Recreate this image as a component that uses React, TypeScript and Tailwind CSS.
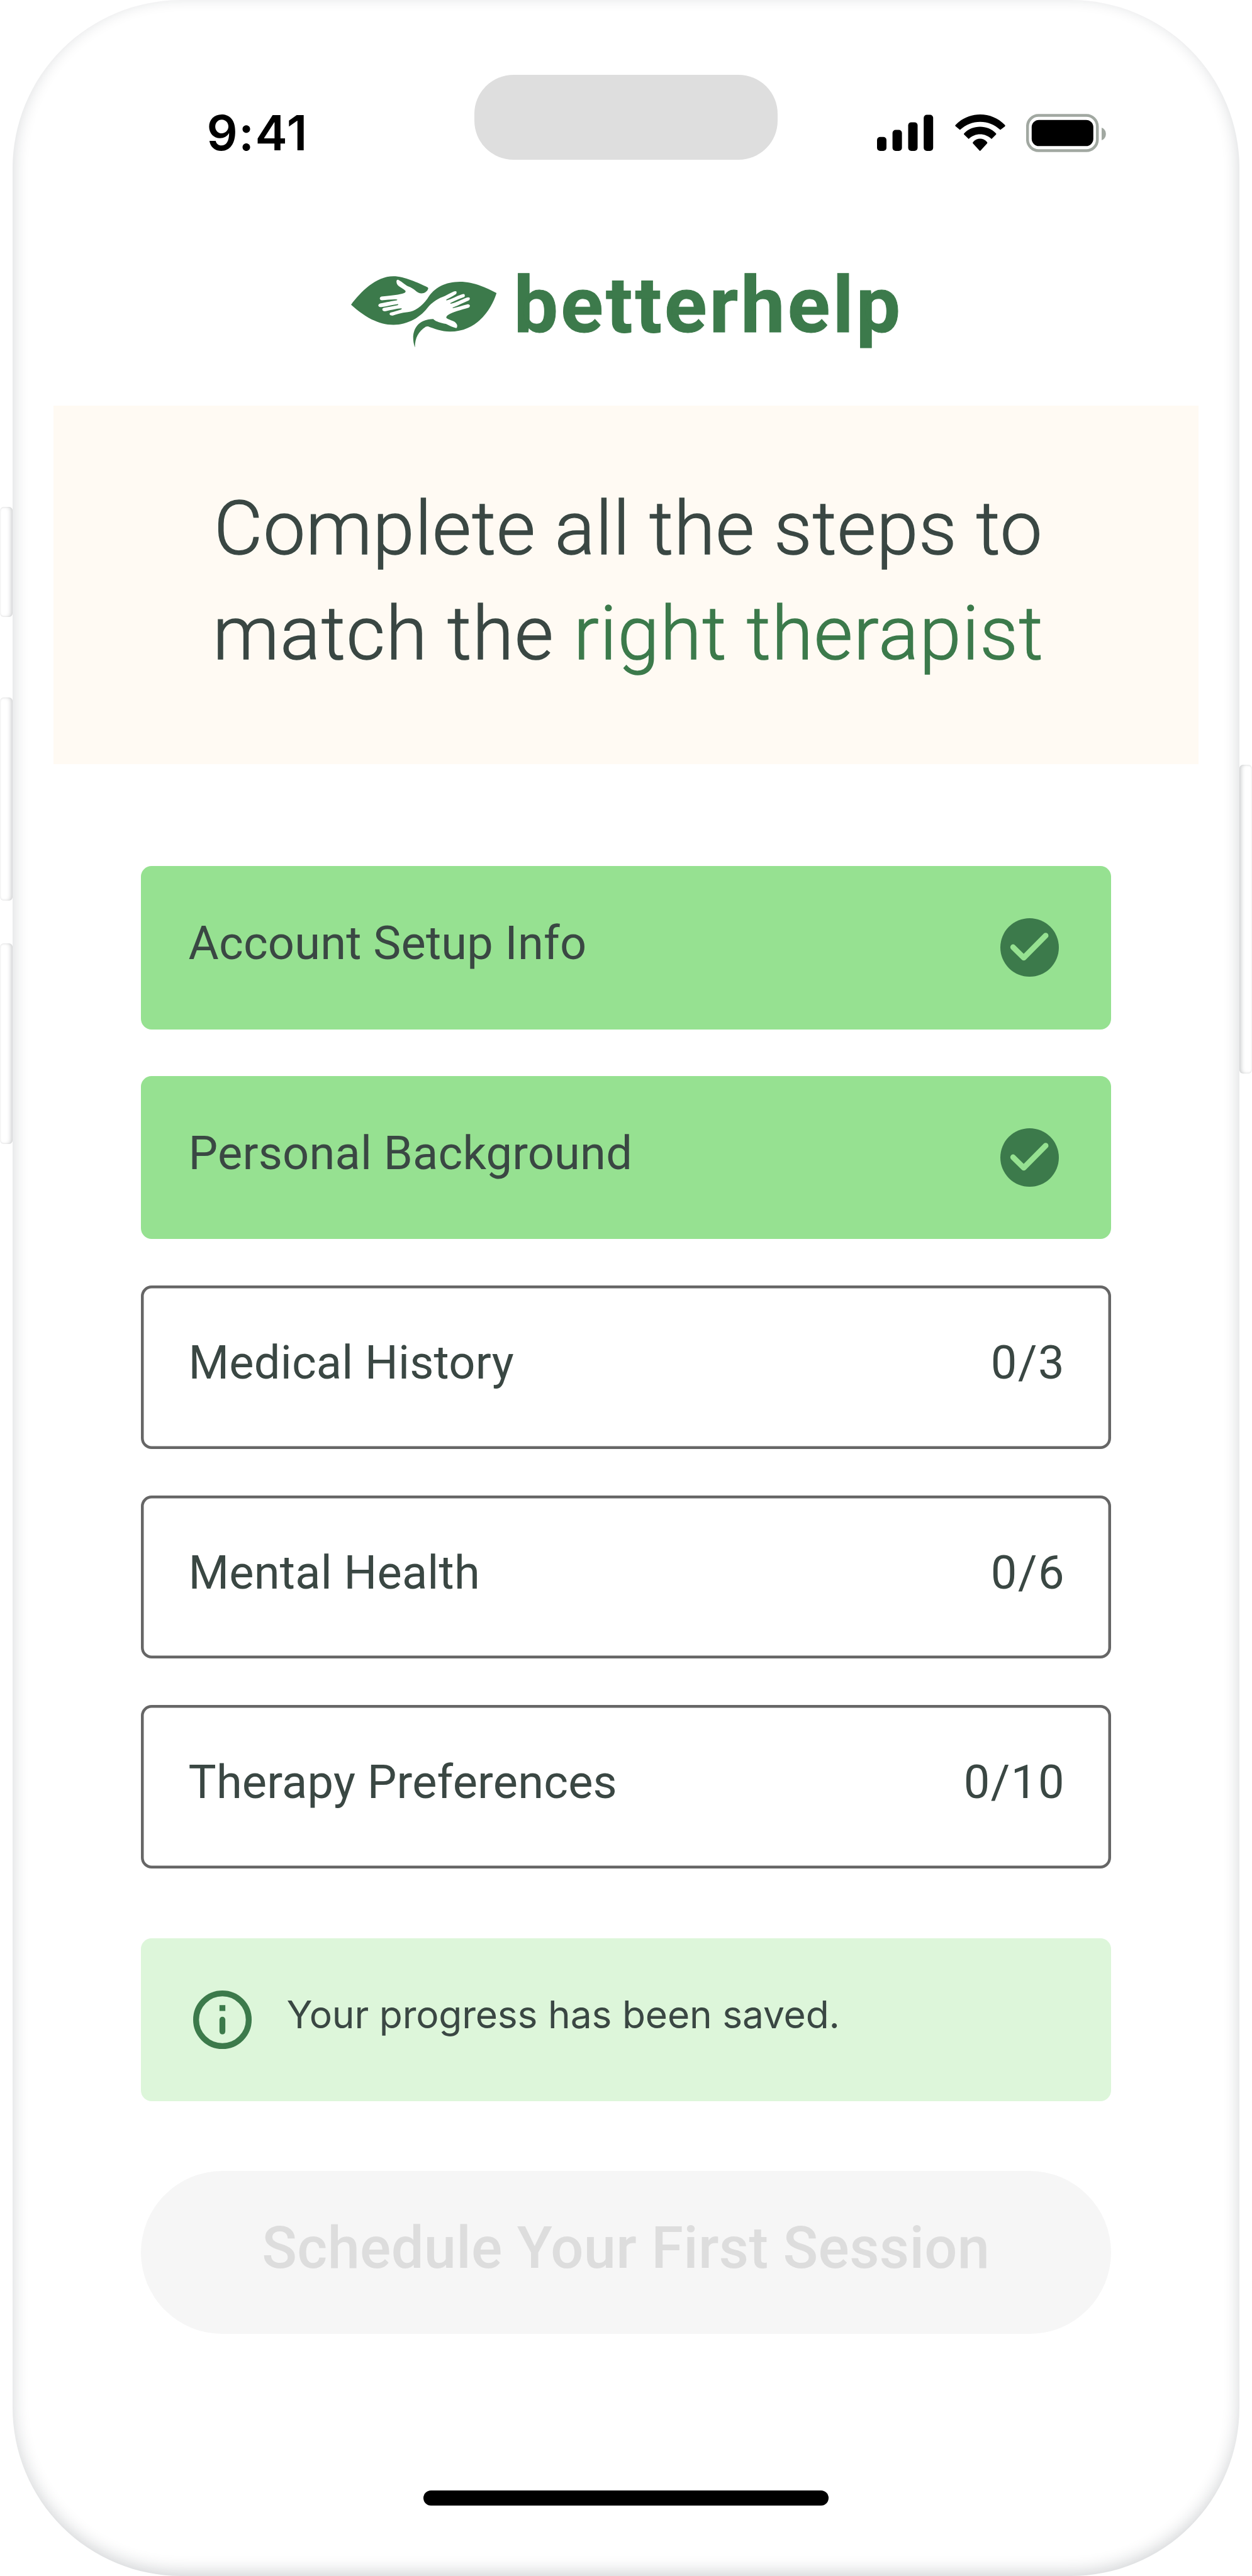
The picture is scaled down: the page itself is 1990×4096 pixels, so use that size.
const steps = [
    { label: 'Account Setup Info', done: true },
    { label: 'Personal Background', done: true },
    { label: 'Medical History', count: '0/3' },
    { label: 'Mental Health', count: '0/6' },
    { label: 'Therapy Preferences', count: '0/10' },
]

function StatusIcons() {
    return (
        <div className="flex items-center">
            <svg className="w-[90px] h-[58px]" viewBox="0 0 90 58">
                <rect x="0" y="35.8" width="15" height="22.2" rx="5" />
                <rect x="24.6" y="24.5" width="15" height="33.5" rx="5" />
                <rect x="49.5" y="12.4" width="15" height="45.6" rx="5" />
                <rect x="74.2" y="0.6" width="15" height="57.4" rx="5" />
            </svg>
            <svg className="w-[80px] h-[59px] ml-[34px]" viewBox="0 0 80 59">
                <path d="M1 16.5C22-5.5 58-5.5 79 16.5Q80.5 17.8 79 19.3L72 24.6C54 7.4 26 7.4 7.8 24.6L.8 18.8Q-.4 17.5 1 16.5Z" />
                <path d="M14.5 30C28 16.1 51.5 16.1 65 30Q66.2 31 65 32L58 39C48 29 31.5 29 21.7 39L14.4 32Q13.5 31 14.5 30Z" />
                <path d="M28.5 44C35 36.7 44.5 36.7 51 44Q51.6 45 51 46L40.5 57.5Q39.7 58.3 38.9 57.5L28.4 46Q27.8 45 28.5 44Z" />
            </svg>
            <svg className="w-[127px] h-[61px] ml-[33px]" viewBox="0 0 127 61">
                <rect
                    x="2.2"
                    y="2.5"
                    width="111"
                    height="56"
                    rx="17.5"
                    fill="none"
                    stroke="#a1a8a1"
                    strokeWidth="4.5"
                />
                <rect x="8.8" y="9.7" width="98" height="41.6" rx="11.5" />
                <path d="M120 22C129 25 129 39 120 42Z" fill="#a1a8a1" />
            </svg>
        </div>
    )
}

function Leaf() {
    return (
        <svg
            className="w-[231.4px] h-[113.6px]"
            viewBox="107 115 1263 620"
            fill="#3c7a4b"
        >
            <path
                d="M107 363C190 255 320 117 475 117C570 117 690 175 770 212Q777 216 776 225Q773 238 755 253C735 268 710 268 690 258
                C665 245 655 225 605 205C580 196 560 170 515 146Q500 145 501 165C503 210 560 215 580 245Q583 262 550 268
                C500 280 450 285 370 292Q355 297 356 310Q360 325 375 325C420 322 470 315 505 318Q512 321 505 325
                C460 330 420 342 360 352Q343 358 343 370Q348 385 370 384C420 378 470 362 515 358Q520 362 512 367
                C470 375 430 383 390 390Q377 395 378 405Q382 420 400 420C440 415 490 398 545 395Q550 400 540 405
                C510 413 480 425 450 432Q440 438 441 447Q447 460 470 457C500 450 540 433 600 428
                C660 420 720 380 770 310C830 210 930 165 1050 164C1170 164 1280 215 1369 263
                C1330 390 1210 597 965 597C890 597 830 572 775 552Q765 550 755 555C690 600 662 650 661 735
                C620 620 660 490 820 487C840 510 880 520 930 530C960 545 990 560 1020 566Q1030 560 1027 540
                C1015 500 960 500 935 480Q928 470 945 455C990 425 1060 410 1130 388Q1140 380 1137 368Q1130 357 1115 360
                C1070 370 1030 385 990 394Q985 390 992 386C1040 370 1080 345 1130 325Q1140 315 1136 303Q1125 295 1110 302
                C1060 320 1020 345 970 355Q965 352 972 347C1010 330 1050 310 1090 297Q1098 285 1090 272Q1080 268 1065 275
                C1020 290 980 315 935 326Q930 322 936 317C960 305 990 290 1018 270Q1026 258 1020 248Q1010 243 995 250
                C960 265 930 285 900 297C850 315 810 345 770 390C700 480 590 538 475 538C330 538 210 455 107 363Z"
            />
        </svg>
    )
}

function CheckIcon() {
    return (
        <svg className="size-[93px]" viewBox="0 0 20 20">
            <circle cx="10" cy="10" r="10" fill="#3c7a4b" />
            <path
                d="M4.35 9.9L8 13.5L15.5 5.95"
                fill="none"
                stroke="#96e191"
                strokeWidth="1.9"
                strokeLinecap="round"
                strokeLinejoin="round"
            />
        </svg>
    )
}

function InfoIcon() {
    return (
        <svg className="size-[93px]" viewBox="0 0 20 20" fill="#3c7a4b">
            <circle
                cx="10"
                cy="10"
                r="9"
                fill="none"
                stroke="#3c7a4b"
                strokeWidth="2"
            />
            <rect x="9" y="5" width="2" height="2" />
            <rect x="9" y="9" width="2" height="6" rx="1" />
        </svg>
    )
}

export default function App() {
    return (
        <div className="flex w-[1990px] h-[4096px] overflow-hidden bg-white font-['Roboto',sans-serif] text-[#3a4743]">
            {/* volume buttons */}
            <div className="flex flex-col w-[19.6px] pt-[806px]">
                <div className="h-[175px] rounded-[6px] shadow-[inset_-5px_0_6px_-2px_#d4d5d6,inset_0_0_3px_#dddddd]"></div>
                <div className="h-[323px] mt-[128px] rounded-[6px] shadow-[inset_-5px_0_6px_-2px_#d4d5d6,inset_0_0_3px_#dddddd]"></div>
                <div className="h-[319px] mt-[68px] rounded-[6px] shadow-[inset_-5px_0_6px_-2px_#d4d5d6,inset_0_0_3px_#dddddd]"></div>
            </div>

            <div className="flex flex-col items-center w-[1950.4px] h-full rounded-[268px] shadow-[inset_0_-7px_26px_rgba(20,30,40,0.19)]">
                <div className="flex w-full h-[134.4px] mt-[119.3px]">
                    <div className="flex items-center w-[734px] pl-[309px] pt-[50px]">
                        <p className="font-['Inter',sans-serif] font-semibold text-[77px] leading-none tracking-[1.5px] text-black whitespace-nowrap">
                            9:41
                        </p>
                    </div>
                    <div className="w-[482.5px] rounded-[62px] bg-[#dedede]"></div>
                    <div className="flex items-center pl-[158px] pt-[50px]">
                        <StatusIcons />
                    </div>
                </div>

                <div className="flex w-full pl-[538.7px] mt-[185px] h-[113.6px]">
                    <Leaf />
                    <p className="ml-[27px] -mt-[16px] text-[125px] leading-[125px] font-bold tracking-[4.2px] text-[#3c7a4b] [-webkit-text-stroke:1px_#3c7a4b]">
                        betterhelp
                    </p>
                </div>

                <div className="w-[1820px] h-[570px] mt-[92.6px] pt-[112px] pl-[8px] bg-[#fffaf3]">
                    <h1 className="flex flex-col items-center text-[119px] leading-[167px] font-light whitespace-nowrap [-webkit-text-stroke:1.4px_currentColor]">
                        <span className="tracking-[1px]">
                            Complete all the steps to
                        </span>
                        <span className="tracking-[1.6px]">
                            match the{' '}
                            <span className="text-[#3c7a4b]">
                                right therapist
                            </span>
                        </span>
                    </h1>
                </div>

                <ul className="flex flex-col gap-[74.1px] w-[1542.5px] mt-[162.4px]">
                    {steps.map((step) => (
                        <li
                            key={step.label}
                            className={
                                step.done
                                    ? 'flex items-center justify-between h-[259.4px] pl-[76px] pr-[83px] rounded-[17px] bg-[#96e191]'
                                    : 'flex items-center justify-between h-[259.4px] pl-[76px] pr-[75px] rounded-[17px] shadow-[inset_0_0_0_4.5px_#666666]'
                            }
                        >
                            <span className="text-[74px] leading-none tracking-[0.2px] pb-[13px]">
                                {step.label}
                            </span>
                            {step.done ? (
                                <CheckIcon />
                            ) : (
                                <span className="text-[74px] leading-none tracking-[1.5px] pb-[13px] -mr-[2px]">
                                    {step.count}
                                </span>
                            )}
                        </li>
                    ))}
                </ul>

                <div className="flex items-center w-[1542.5px] h-[259.4px] mt-[111px] pl-[83px] rounded-[17px] bg-[#ddf6da]">
                    <InfoIcon />
                    <p className="ml-[56px] pb-[16px] font-['Inter',sans-serif] text-[60.5px] leading-none tracking-[-0.2px]">
                        Your progress has been saved.
                    </p>
                </div>

                <button className="w-[1542.5px] h-[259.4px] mt-[111px] pb-[14px] rounded-full bg-[#f6f6f6] text-[92px] leading-none font-medium tracking-[0.3px] text-[#dddddd]">
                    Schedule Your First Session
                </button>

                <div className="w-[644px] h-[24px] mt-[249px] rounded-full bg-black"></div>
            </div>

            {/* power button */}
            <div className="w-[20px] pt-[1216px]">
                <div className="h-[491px] rounded-[6px] shadow-[inset_5px_0_6px_-2px_#cfd1d2,inset_0_0_3px_#dddddd]"></div>
            </div>
        </div>
    )
}
